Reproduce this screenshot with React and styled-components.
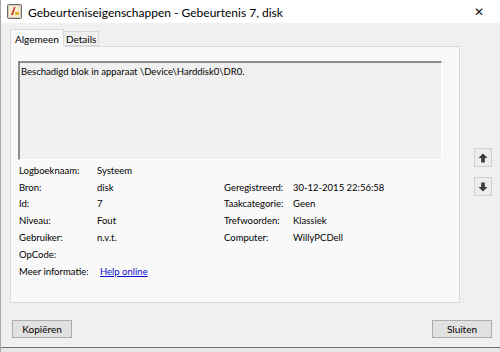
import React from "react";
import styled, { createGlobalStyle } from "styled-components";

const GlobalStyle = createGlobalStyle`
	html, body {
		margin: 0;
		padding: 0;
		background: #f0f0f0;
	}
	body {
		font-family: Lato, "Liberation Sans", sans-serif;
		font-size: 9.5px;
		color: #000;
	}
`;

const fields = [
	{ label: "Logboeknaam:", value: "Systeem" },
	{ label: "Bron:", value: "disk", rlabel: "Geregistreerd:", rvalue: "30-12-2015 22:56:58" },
	{ label: "Id:", value: "7", rlabel: "Taakcategorie:", rvalue: "Geen" },
	{ label: "Niveau:", value: "Fout", rlabel: "Trefwoorden:", rvalue: "Klassiek" },
	{ label: "Gebruiker:", value: "n.v.t.", rlabel: "Computer:", rvalue: "WillyPCDell" },
	{ label: "OpCode:", value: "" },
];

function ArrowIcon({ down }) {
	return (
		<svg width="10" height="10" viewBox="0 0 10 10">
			<path
				d="M5 0.5 L9.5 5 L6.8 5 L6.8 9.5 L3.2 9.5 L3.2 5 L0.5 5 Z"
				fill="#3a3a3a"
				transform={down ? "rotate(180 5 5)" : undefined}
			/>
		</svg>
	);
}

function WindowIcon() {
	return (
		<svg width="15" height="15" viewBox="0 0 15 15">
			<rect x="0.5" y="0.5" width="14" height="14" rx="1" fill="#d8cfc0" stroke="#6b6b6b" />
			<rect x="2" y="2" width="11" height="11" fill="#f4ecd0" />
			<path d="M4 11 L7 3 L8.5 3 L6 11 Z" fill="#c0392b" />
			<rect x="8" y="8" width="4" height="3" fill="#e6b422" />
		</svg>
	);
}

function App() {
	return (
		<>
			<GlobalStyle />
			<Window>
				<TitleBar>
					<WindowIcon />
					<Title>Gebeurteniseigenschappen - Gebeurtenis 7, disk</Title>
					<Close>✕</Close>
				</TitleBar>
				<Body>
					<MainRow>
						<TabArea>
							<Tabs>
								<Tab active>Algemeen</Tab>
								<Tab>Details</Tab>
							</Tabs>
							<Panel>
								<Description>Beschadigd blok in apparaat \Device\Harddisk0\DR0.</Description>
								<Fields>
									{fields.map((f) => (
										<React.Fragment key={f.label}>
											<Label>{f.label}</Label>
											<Value>{f.value}</Value>
											<Label>{f.rlabel || ""}</Label>
											<Value>{f.rvalue || ""}</Value>
										</React.Fragment>
									))}
									<Label>Meer informatie:</Label>
									<Value>
										<HelpLink href="#">Help online</HelpLink>
									</Value>
								</Fields>
							</Panel>
						</TabArea>
						<Arrows>
							<ArrowButton>
								<ArrowIcon />
							</ArrowButton>
							<ArrowButton>
								<ArrowIcon down />
							</ArrowButton>
						</Arrows>
					</MainRow>
					<Footer>
						<Button>Kopiëren</Button>
						<Button>Sluiten</Button>
					</Footer>
				</Body>
				<BehindStrip>
					<span>Informatie</span>
					<span>20-12-2015 22:30:10</span>
				</BehindStrip>
			</Window>
		</>
	);
}

export default App;

const Window = styled.div`
	width: 500px;
	height: 352px;
	display: flex;
	flex-direction: column;
	box-sizing: border-box;
	border-left: 1px solid #a8a8a8;
	overflow: hidden;
	background: #f0f0f0;
`;

const TitleBar = styled.div`
	height: 23px;
	flex-shrink: 0;
	background: #fff;
	display: flex;
	align-items: center;
	padding-left: 6px;
	gap: 6px;
`;

const Title = styled.div`
	font-size: 12px;
	color: #000;
	flex: 1;
	padding-top: 1px;
`;

const Close = styled.div`
	width: 30px;
	text-align: center;
	font-size: 12px;
	color: #111;
	margin-right: 6px;
`;

const Body = styled.div`
	flex: 1;
	display: flex;
	flex-direction: column;
	padding: 6px 0 0 9px;
`;

const MainRow = styled.div`
	display: flex;
`;

const TabArea = styled.div`
	width: 450px;
	display: flex;
	flex-direction: column;
`;

const Tabs = styled.div`
	display: flex;
	height: 17px;
	align-items: flex-end;
	position: relative;
	z-index: 1;
`;

const Tab = styled.div`
	box-sizing: border-box;
	height: ${(p) => (p.active ? "18px" : "15px")};
	padding: 0 ${(p) => (p.active ? "4px" : "2px")};
	border: 1px solid #d9d9d9;
	border-bottom: ${(p) => (p.active ? "none" : "1px solid #d9d9d9")};
	border-left: ${(p) => (p.active ? "1px solid #d9d9d9" : "none")};
	background: ${(p) => (p.active ? "#f9f9f9" : "#f0f0f0")};
	margin-bottom: ${(p) => (p.active ? "-1px" : "0")};
	display: flex;
	align-items: center;
	font-size: 10px;
`;

const Panel = styled.div`
	box-sizing: border-box;
	height: 257px;
	border: 1px solid #d9d9d9;
	background: #f9f9f9;
	padding: 14px 0 0 7px;
`;

const Description = styled.div`
	box-sizing: border-box;
	width: 424px;
	height: 99px;
	border-top: 2px solid #8c8c8c;
	border-left: 2px solid #8c8c8c;
	border-right: 1px solid #fff;
	border-bottom: 1px solid #fff;
	background: #f0f0f0;
	padding: 3px 1px;
`;

const Fields = styled.div`
	display: grid;
	grid-template-columns: 78px 127px 69px auto;
	grid-auto-rows: 16.8px;
	align-items: center;
	margin-top: 2px;
	padding-left: 1px;
`;

const Label = styled.div`
	white-space: nowrap;
`;

const Value = styled.div`
	white-space: nowrap;
`;

const HelpLink = styled.a`
	color: #0b0bd0;
	text-decoration: underline;
	margin-left: 3px;
`;

const Arrows = styled.div`
	display: flex;
	flex-direction: column;
	gap: 10px;
	padding: 119px 0 0 14px;
`;

const ArrowButton = styled.div`
	box-sizing: border-box;
	width: 18px;
	height: 19px;
	border: 1px solid #d0d0d0;
	background: #ececec;
	display: flex;
	align-items: center;
	justify-content: center;
`;

const Footer = styled.div`
	display: flex;
	justify-content: space-between;
	padding: 17px 8px 0 2px;
`;

const Button = styled.div`
	box-sizing: border-box;
	width: 60px;
	height: 18px;
	border: 1px solid #adadad;
	background: #e1e1e1;
	display: flex;
	align-items: center;
	justify-content: center;
	font-size: 10px;
`;

const BehindStrip = styled.div`
	margin-top: auto;
	height: 4px;
	flex-shrink: 0;
	border-top: 1px solid #6e6e6e;
	background: #e8e8e8;
	display: flex;
	gap: 60px;
	padding-left: 165px;
	font-size: 10px;
	line-height: 14px;
	color: #333;
	overflow: hidden;
`;
